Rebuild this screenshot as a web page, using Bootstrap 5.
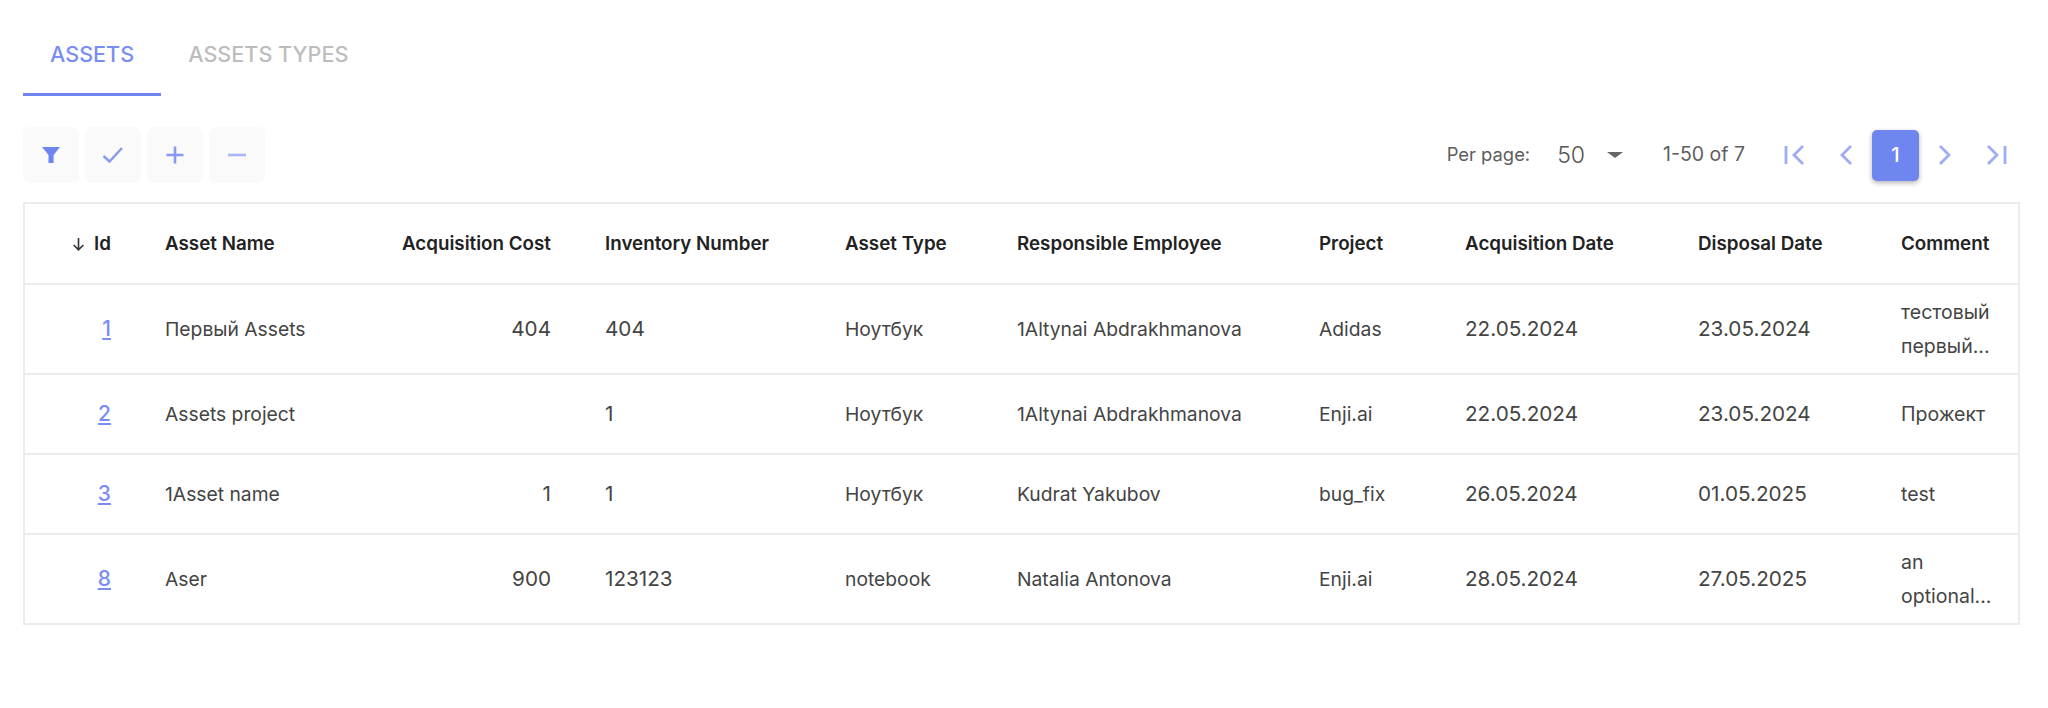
<!DOCTYPE html>
<html lang="en">
<head>
<meta charset="utf-8">
<title>Assets</title>
<link rel="stylesheet" href="https://cdn.jsdelivr.net/npm/bootstrap@5.3.0/dist/css/bootstrap.min.css">
<style>
body { font-family: Inter, "Noto Sans", sans-serif; background: #fff; color: #3c3c3c; }
.page-wrap { padding: 0 29px 0 23px; }
.tab-bar { height: 96px; }
.tab-link { display: flex; align-items: center; height: 96px; padding: 16px 27px 0; font-size: 21.6px; font-weight: 500; color: #bdbdbd; text-decoration: none; text-transform: uppercase; border-bottom: 3px solid transparent; }
.tab-link.on { color: #7a8df5; border-bottom-color: #6f86f0; }
.tool-row { height: 106px; padding-top: 12px; }
.tool-btn { width: 56px; height: 56px; padding: 0; border: 0; border-radius: 7px; background: #fafafa; display: flex; align-items: center; justify-content: center; }
.tool-set { gap: 6px; }
.pager { font-size: 18.4px; color: #5e5e5e; margin-right: 11px; }
.per-label { margin-right: 27px; }
.per-value { font-size: 23px; font-weight: 300; color: #555; margin-right: 22px; }
.caret-down { width: 0; height: 0; border-left: 8px solid transparent; border-right: 8px solid transparent; border-top: 6px solid #666; margin-right: 40px; }
.range-text { font-size: 19.5px; margin-right: 38px; }
.page-now { width: 47px; height: 51px; border: 0; border-radius: 5px; background: #6f86f0; color: #fff; font-size: 20px; font-weight: 500; box-shadow: 0 2px 5px rgba(0,0,0,.3); padding: 0; margin: 0 14px 0 14px; }
.page-arrow { display: flex; align-items: center; justify-content: center; width: 24px; }
.arrow-gap-after { margin-right: 27px; }
.data-grid { table-layout: fixed; width: 1995px; margin: 0; border: 2px solid #ececec; font-size: 19.3px; }
.data-grid th, .data-grid td { padding: 0 27px; vertical-align: middle; border-bottom: 2px solid #ececec; color: #444; font-weight: 400; line-height: 34px; }
.data-grid th { font-size: 18.8px; font-weight: 600; color: #222; height: 81px; white-space: nowrap; }
.data-grid tbody tr:nth-child(1) td { height: 90px; }
.data-grid tbody tr:nth-child(2) td, .data-grid tbody tr:nth-child(3) td { height: 80px; }
.data-grid tbody tr:nth-child(4) td { height: 90px; border-bottom: 0; }
.data-grid a { color: #7a8df5; font-weight: 500; font-size: 21px; }
.w-a { width: 114px; } .w-b { width: 440px; } .w-c { width: 240px; } .w-d { width: 172px; } .w-e { width: 302px; }
.w-f { width: 146px; } .w-g { width: 233px; } .w-h { width: 203px; } .w-i { width: 145px; }
.data-grid td.num-cell, .num-cell { font-size: 20.7px; }
.data-grid td.note-cell { font-size: 19.5px; overflow: hidden; }
</style>
</head>
<body>
<div class="page-wrap">
  <nav class="d-flex tab-bar">
    <a class="tab-link on" href="#">Assets</a>
    <a class="tab-link" href="#">Assets Types</a>
  </nav>
  <div class="d-flex align-items-center justify-content-between tool-row">
    <div class="d-flex tool-set">
      <button class="tool-btn" type="button" aria-label="Filter"><svg width="20" height="20" viewBox="0 0 20 20"><path d="M1 2h18l-6.4 8v8H7.5v-8z" fill="#6f86f0"/></svg></button>
      <button class="tool-btn" type="button" aria-label="Check"><svg width="22" height="18" viewBox="0 0 22 18"><path d="M1.5 10l6 5.5L20 2" fill="none" stroke="#8799f2" stroke-width="2.4"/></svg></button>
      <button class="tool-btn" type="button" aria-label="Add"><svg width="20" height="20" viewBox="0 0 20 20"><path d="M10 1.5v17M1.5 10h17" fill="none" stroke="#8799f2" stroke-width="2.6"/></svg></button>
      <button class="tool-btn" type="button" aria-label="Remove"><svg width="20" height="20" viewBox="0 0 20 20"><path d="M1 10h18" fill="none" stroke="#a9b6f5" stroke-width="2.6"/></svg></button>
    </div>
    <div class="d-flex align-items-center pager">
      <span class="per-label">Per page:</span>
      <span class="per-value">50</span>
      <span class="caret-down"></span>
      <span class="range-text">1-50 of 7</span>
      <div class="d-flex align-items-center">
        <span class="page-arrow arrow-gap-after"><svg width="24" height="24" viewBox="0 0 24 24"><path d="M3 3v18M20 3l-9 9 9 9" fill="none" stroke="#9dacf5" stroke-width="2.8"/></svg></span>
        <span class="page-arrow"><svg width="16" height="24" viewBox="0 0 16 24"><path d="M13 3l-9 9 9 9" fill="none" stroke="#9dacf5" stroke-width="2.8"/></svg></span>
        <button class="page-now" type="button">1</button>
        <span class="page-arrow arrow-gap-after"><svg width="16" height="24" viewBox="0 0 16 24"><path d="M3 3l9 9-9 9" fill="none" stroke="#9dacf5" stroke-width="2.8"/></svg></span>
        <span class="page-arrow"><svg width="24" height="24" viewBox="0 0 24 24"><path d="M4 3l9 9-9 9M21 3v18" fill="none" stroke="#9dacf5" stroke-width="2.8"/></svg></span>
      </div>
    </div>
  </div>
  <table class="table data-grid">
    <thead>
      <tr>
        <th class="w-a text-end"><svg width="15" height="15" viewBox="0 0 14 14" class="me-2"><path d="M7 1v11M2.5 7.5L7 12l4.5-4.5" fill="none" stroke="#333" stroke-width="1.5"/></svg>Id</th>
        <th class="w-b"><div class="d-flex justify-content-between"><span>Asset Name</span><span>Acquisition Cost</span></div></th>
        <th class="w-c">Inventory Number</th>
        <th class="w-d">Asset Type</th>
        <th class="w-e">Responsible Employee</th>
        <th class="w-f">Project</th>
        <th class="w-g">Acquisition Date</th>
        <th class="w-h">Disposal Date</th>
        <th class="w-i">Comment</th>
      </tr>
    </thead>
    <tbody>
      <tr>
        <td class="text-end"><a href="#">1</a></td>
        <td><div class="d-flex justify-content-between"><span>Первый Assets</span><span class="num-cell">404</span></div></td>
        <td class="num-cell">404</td><td>Ноутбук</td><td>1Altynai Abdrakhmanova</td><td>Adidas</td><td class="num-cell">22.05.2024</td><td class="num-cell">23.05.2024</td>
        <td class="note-cell">тестовый первый...</td>
      </tr>
      <tr>
        <td class="text-end"><a href="#">2</a></td>
        <td>Assets project</td>
        <td class="num-cell">1</td><td>Ноутбук</td><td>1Altynai Abdrakhmanova</td><td>Enji.ai</td><td class="num-cell">22.05.2024</td><td class="num-cell">23.05.2024</td>
        <td class="note-cell">Прожект</td>
      </tr>
      <tr>
        <td class="text-end"><a href="#">3</a></td>
        <td><div class="d-flex justify-content-between"><span>1Asset name</span><span class="num-cell">1</span></div></td>
        <td class="num-cell">1</td><td>Ноутбук</td><td>Kudrat Yakubov</td><td>bug_fix</td><td class="num-cell">26.05.2024</td><td class="num-cell">01.05.2025</td>
        <td class="note-cell">test</td>
      </tr>
      <tr>
        <td class="text-end"><a href="#">8</a></td>
        <td><div class="d-flex justify-content-between"><span>Aser</span><span class="num-cell">900</span></div></td>
        <td class="num-cell">123123</td><td>notebook</td><td>Natalia Antonova</td><td>Enji.ai</td><td class="num-cell">28.05.2024</td><td class="num-cell">27.05.2025</td>
        <td class="note-cell">an optional...</td>
      </tr>
    </tbody>
  </table>
</div>
<script src="https://cdn.jsdelivr.net/npm/bootstrap@5.3.0/dist/js/bootstrap.bundle.min.js"></script>
</body>
</html>
